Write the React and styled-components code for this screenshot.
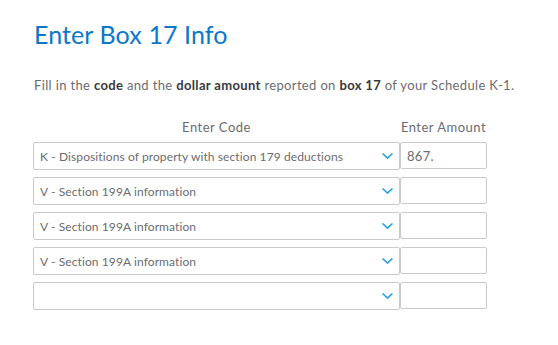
import React from 'react';
import styled, { createGlobalStyle } from 'styled-components';

const GlobalStyle = createGlobalStyle`
  html, body {
    margin: 0;
    padding: 0;
    background: #ffffff;
  }
  body {
    font-family: 'Lato', 'Noto Sans', sans-serif;
  }
`;

const Page = styled.div`
  padding: 17px 0 0 33px;
  width: 558px;
  height: 345px;
  box-sizing: border-box;
`;

const Title = styled.h1`
  margin: 0;
  font-size: 25px;
  font-weight: 400;
  line-height: 34px;
  color: #0b78c8;
  padding-left: 1px;
  letter-spacing: 0.1px;
`;

const Intro = styled.p`
  margin: 25px 0 0 1px;
  font-size: 13px;
  line-height: 18px;
  color: #6b6c72;
  letter-spacing: 0.35px;

  b {
    font-weight: 700;
    color: #393a3d;
  }
`;

const Form = styled.div`
  display: grid;
  grid-template-columns: 367px 87px;
  row-gap: 7px;
  margin-top: 24px;
`;

const ColHead = styled.div`
  font-size: 13px;
  line-height: 18px;
  color: #6b6c72;
  text-align: center;
  letter-spacing: 0.5px;
  margin-bottom: -1px;
`;

const SelectBox = styled.div`
  display: flex;
  align-items: center;
  justify-content: space-between;
  height: 28px;
  box-sizing: border-box;
  border: 1px solid #c9cacd;
  border-radius: 2px;
  padding: 0 6px 0 6px;
  font-size: 12px;
  letter-spacing: 0.1px;
  color: #6b6c72;
`;

const AmountBox = styled.div`
  display: flex;
  align-items: center;
  height: 27px;
  box-sizing: border-box;
  border: 1px solid #c9cacd;
  border-radius: 2px;
  padding: 0 6px;
  font-size: 13px;
  letter-spacing: 0.3px;
  color: #6b6c72;
`;

const ChevronIcon = styled.svg`
  flex: none;
`;

const Chevron = () => (
  <ChevronIcon width="11" height="6" viewBox="0 0 11 6" fill="none">
    <path d="M1 0.9l4.5 4.2 4.5-4.2" stroke="#2ca1e0" strokeWidth="1.5" strokeLinecap="round" strokeLinejoin="round" />
  </ChevronIcon>
);

const rows = [
  { code: 'K - Dispositions of property with section 179 deductions', amount: '867.' },
  { code: 'V - Section 199A information', amount: '' },
  { code: 'V - Section 199A information', amount: '' },
  { code: 'V - Section 199A information', amount: '' },
  { code: '', amount: '' }
];

const App = () => (
  <Page>
    <GlobalStyle />
    <Title>Enter Box 17 Info</Title>
    <Intro>
      Fill in the <b>code</b> and the <b>dollar amount</b> reported on <b>box 17</b> of your Schedule K-1.
    </Intro>
    <Form>
      <ColHead>Enter Code</ColHead>
      <ColHead>Enter Amount</ColHead>
      {rows.map((row, i) => (
        <React.Fragment key={i}>
          <SelectBox>
            <span>{row.code}</span>
            <Chevron />
          </SelectBox>
          <AmountBox>{row.amount}</AmountBox>
        </React.Fragment>
      ))}
    </Form>
  </Page>
);

export default App;
